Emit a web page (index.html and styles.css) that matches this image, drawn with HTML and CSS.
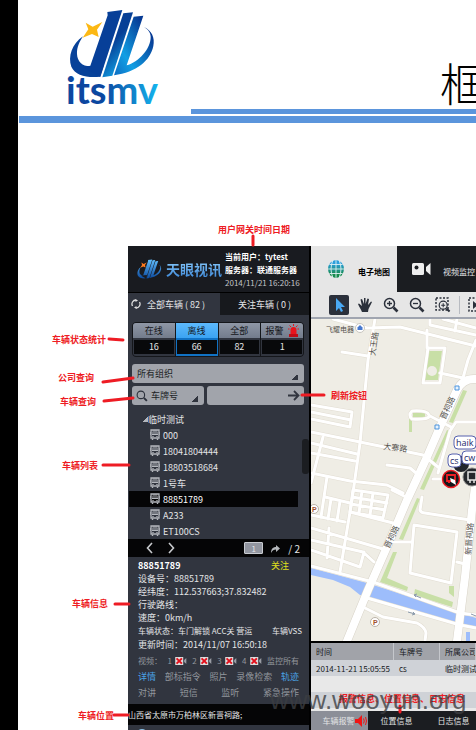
FILE: index.html
```html
<!DOCTYPE html>
<html lang="zh-CN">
<head>
<meta charset="utf-8">
<title>天眼视讯</title>
<link rel="stylesheet" href="styles.css">
</head>
<body>
<svg class="defs" width="0" height="0" aria-hidden="true">
  <defs>
    <symbol id="bus" viewBox="0 0 10 12"><path d="M1 1h8v8H1z" fill="none" stroke="#b4b7bd" stroke-width="1.3"/><path d="M2.500 2h5M2 4h6M2 5.500h6" stroke="#b4b7bd"/><path d="M0 3v3M10 3v3M2.500 9.500v1.500M7.500 9.500v1.500" stroke="#b4b7bd" stroke-width="1.4"/><path d="M2.500 7.500h1M6.500 7.500h1" stroke="#dcdee2"/></symbol>
    <symbol id="cam" viewBox="0 0 13 9"><path d="M0 0h9v9H0z" fill="#ddd"/><path d="M1.500 1.500l6 6M7.500 1.500l-6 6" stroke="#e3101c" stroke-width="2.200"/><path d="M12.500 1v7L10 5.500v-2z" fill="#9a9da4"/></symbol>
    <symbol id="lens" viewBox="0 0 16 16"><circle cx="6.500" cy="6.500" r="5" fill="none" stroke="#2b303b" stroke-width="1.500"/><path d="M10.500 10.500l4 4" stroke="#2b303b" stroke-width="2.600"/></symbol>
  </defs>
</svg>
<div class="slide">
  <header class="masthead">
    <svg class="logo" viewBox="195 24 285 300" role="img" aria-label="itsmv">
      <defs>
        <linearGradient id="g1" x1="0" y1="0" x2=".5" y2="1"><stop offset=".5" stop-color="#063f96"/><stop offset="1" stop-color="#12a6e8"/></linearGradient>
        <linearGradient id="g2" x1="0" y1="0" x2="1" y2="0"><stop offset=".4" stop-color="#0b47a0"/><stop offset="1" stop-color="#14b4ee"/></linearGradient>
        <linearGradient id="g3" x1="1" y1="0" x2="0" y2="1"><stop offset=".2" stop-color="#063a94"/><stop offset=".7" stop-color="#119fe4"/><stop offset="1" stop-color="#0d6cc2"/></linearGradient>
      </defs>
      <path d="M249 109C216 132 203 170 214 200c12 26 46 34 86 30l12-36-32 4c-28 5-48-10-49-36-1-20 8-38 18-53z" fill="#084299"/>
      <path d="M322 36l45-6-66 201-52-29 22-5 52-151z" fill="#073f98"/>
      <path d="M370 40l29-3-62 190-30 5z" fill="url(#g1)"/>
      <path d="M401 50l29-3-50 149c36-10 73-50 72-86 0-12-8-22-20-29 24 12 33 32 28 57-9 44-50 78-118 88z" fill="url(#g3)"/>
      <path d="M257 68l21 12 29-14-16 23 5 22-20-9-28 11 17-25z" fill="#fcb814"/>
      <text x="198" y="313" class="logo-word" fill="url(#g2)">itsmv</text>
    </svg>
    <h1>框</h1>
  </header>
  <div class="rule-thin"></div>
  <div class="rule-thick"></div>

  <div class="app">
    <aside class="side">
      <div class="brand">
        <svg class="brand-mark" viewBox="195 24 275 215" aria-hidden="true">
          <defs><linearGradient id="g4" x1="0" y1="0" x2="0" y2="1"><stop offset="0" stop-color="#62c0ff"/><stop offset="1" stop-color="#0c4a9e"/></linearGradient></defs>
          <path d="M249 109C216 132 203 170 214 200c12 26 46 34 86 30l12-36-32 4c-28 5-48-10-49-36-1-20 8-38 18-53zM322 36l45-6-66 201-52-29 22-5 52-151zM370 40l29-3-62 190-30 5zM401 50l29-3-50 149c36-10 73-50 72-86 0-12-8-22-20-29 24 12 33 32 28 57-9 44-50 78-118 88z" fill="url(#g4)"/>
          <path d="M252 64l24 14 32-16-18 27 6 26-24-10-32 13 19-29z" fill="#ff7a1c"/>
        </svg>
        <strong class="brand-name">天眼视讯</strong>
        <div class="session">
          <b>当前用户：tytest</b>
          <b>服务器：联通服务器</b>
          <time>2014/11/21 16:20:16</time>
        </div>
      </div>
      <nav class="side-tabs">
        <button class="on"><svg width="10" height="10" viewBox="0 0 10 10"><path d="M1.500 7A4 4 0 0 1 5 1M8.500 3A4 4 0 0 1 5 9" fill="none" stroke="#ddd" stroke-width="1.300"/><path d="M4.500 0v3L7 1.500zM5.500 7v3L3 8.500z" fill="#ddd"/></svg>全部车辆 ( 82 )</button>
        <button>关注车辆 ( 0 )</button>
      </nav>
      <div class="stats">
        <button><span>在线</span><b>16</b></button>
        <button class="on"><span>离线</span><b>66</b></button>
        <button><span>全部</span><b>82</b></button>
        <button><span>报警 <svg width="11" height="13" viewBox="0 0 11 13"><path d="M2.500 10V6a3 3 0 0 1 6 0v4z" fill="#e8141c"/><path d="M1 10h9v3H1z" fill="#c00d16"/><path d="M5.500 0v2M1.500 1.500l1.500 1.500M9.500 1.500L8 3M0 5h1.500M9.500 5H11" stroke="#e8141c"/></svg></span><b>1</b></button>
      </div>
      <div class="filters">
        <select class="org" aria-label="组织"><option>所有组织</option></select>
        <div class="search">
          <div class="key">
            <svg width="12" height="12" viewBox="0 0 16 16"><use href="#lens"/></svg>
            <select aria-label="查询方式"><option>车牌号</option></select>
          </div>
          <div class="query">
            <input type="text" aria-label="查询内容">
            <button aria-label="刷新"><svg width="12" height="11" viewBox="0 0 12 11"><path d="M0 5.500h10M6 1l4.500 4.500L6 10" fill="none" stroke="#31353f" stroke-width="1.800"/></svg></button>
          </div>
        </div>
      </div>
      <div class="tree">
        <ul>
          <li class="group"><i></i>临时测试</li>
          <li><svg><use href="#bus"/></svg>000</li>
          <li><svg><use href="#bus"/></svg>18041804444</li>
          <li><svg><use href="#bus"/></svg>18803518684</li>
          <li><svg><use href="#bus"/></svg>1号车</li>
          <li class="on"><svg><use href="#bus"/></svg>88851789</li>
          <li><svg><use href="#bus"/></svg>A233</li>
          <li><svg><use href="#bus"/></svg>ET100CS</li>
        </ul>
        <div class="thumb"></div>
      </div>
      <div class="pager">
        <button aria-label="上一页"><svg width="7" height="12" viewBox="0 0 7 12"><path d="M6 1L1.500 6 6 11" fill="none" stroke="#c8cacd" stroke-width="1.600"/></svg></button>
        <button aria-label="下一页"><svg width="7" height="12" viewBox="0 0 7 12"><path d="M1 1l4.500 5L1 11" fill="none" stroke="#c8cacd" stroke-width="1.600"/></svg></button>
        <input type="text" value="1" aria-label="页码">
        <button aria-label="跳转"><svg width="9" height="9" viewBox="0 0 9 9"><path d="M0 9c0-4 2-6 5-6V1l4 3.500L5 8V5.500C3 5.500 1 6.500 0 9z" fill="#b4b7bb"/></svg></button>
        <span>/ 2</span>
      </div>
      <section class="info">
        <p class="head"><b>88851789</b><a href="#">关注</a></p>
        <p>设备号：88851789</p>
        <p>经纬度：112.537663;37.832482</p>
        <p>行驶路线：</p>
        <p>速度：0km/h</p>
        <p class="split"><span>车辆状态：车门解锁 ACC关 营运</span><span>车辆VSS</span></p>
        <p class="tall">更新时间：2014/11/07 16:50:18</p>
        <div class="acts video"><span>视频：</span><span>1 <svg><use href="#cam"/></svg></span><span>2 <svg><use href="#cam"/></svg></span><span>3 <svg><use href="#cam"/></svg></span><span>4 <svg><use href="#cam"/></svg></span><a href="#">监控所有</a></div>
        <div class="acts"><a class="hot" href="#">详情</a><a href="#">部标指令</a><a href="#">照片</a><a href="#">录像检索</a><a class="hot" href="#">轨迹</a></div>
        <div class="acts"><a href="#">对讲</a><a href="#">短信</a><a href="#">监听</a><a href="#">紧急操作</a></div>
      </section>
      <p class="address">山西省太原市万柏林区新晋祠路;</p>
      <div class="dock"><i></i></div>
    </aside>

    <main class="main">
      <nav class="views">
        <button class="on"><svg width="16" height="18" viewBox="0 0 16 18"><defs><linearGradient id="g5" x1="0" y1="0" x2="0" y2="1"><stop offset=".2" stop-color="#2b9fdc"/><stop offset=".8" stop-color="#178a4c"/></linearGradient></defs><ellipse cx="8" cy="9" rx="8" ry="9" fill="url(#g5)"/><path d="M8 0v18M0 9h16M1.500 4.500h13M1.500 13.500h13M5 0Q1 9 5 18M11 0Q15 9 11 18" fill="none" stroke="#dff1f4" stroke-width=".9"/></svg>电子地图</button>
        <button><svg width="19" height="12" viewBox="0 0 19 12"><rect width="12" height="12" rx="1.500" fill="#eee"/><circle cx="4.500" cy="4.500" r="2" fill="#1b1d21"/><path d="M18.500 0v12L14 8V4z" fill="#eee"/></svg>视频监控</button>
      </nav>
      <div class="tools">
        <button class="on" aria-label="选择"><svg width="20" height="20" viewBox="0 0 20 20"><path d="M7 3v13l3-3 2 4 2-1-2-4h4z" fill="#4aa9f5"/></svg></button>
        <button aria-label="平移"><svg width="16" height="16" viewBox="0 0 16 16"><path d="M5 15C4 12 2 10 1 7l1-.5L5 9 3.500 2.500 5 2l2 5V1h1.500v6L10.500 1.500l1.500.5-1 6 3-3.500 1 .5-3.500 7-.5 3z" fill="#2b303b"/></svg></button>
        <button aria-label="放大"><svg width="16" height="16" viewBox="0 0 16 16"><use href="#lens"/><path d="M4 6.500h5M6.500 4v5" stroke="#2b303b" stroke-width="1.300"/></svg></button>
        <button aria-label="缩小"><svg width="16" height="16" viewBox="0 0 16 16"><use href="#lens"/><path d="M4 6.500h5" stroke="#2b303b" stroke-width="1.300"/></svg></button>
        <button aria-label="框选放大"><svg width="16" height="16" viewBox="0 0 16 16"><path d="M1 1h12v12H1z" fill="none" stroke="#2b303b" stroke-width="1.500" stroke-dasharray="2 1.500"/><g transform="translate(3 3) scale(.8)"><use href="#lens" width="16" height="16"/><path d="M4 6.500h5M6.500 4v5" stroke="#2b303b" stroke-width="1.300"/></g></svg></button>
        <i></i>
        <button aria-label="框选"><svg width="16" height="16" viewBox="0 0 16 16"><path d="M1 1h13v13H1z" fill="none" stroke="#2b303b" stroke-width="1.500" stroke-dasharray="2 1.500"/><path d="M5 4v8l5-4z" fill="#2b303b"/></svg></button>
      </div>
      <svg class="map" viewBox="311 319 165 322" preserveAspectRatio="xMinYMin slice" role="img" aria-label="电子地图">
        <defs>
          <g id="minor">
            <path d="M333 319l34 9 33-1 76 19M375 319l-7 41-8 83-8 57-12 72M342 352l26 4M427 330v18M428 348h17l-5 35h-17zM430 319v6l46 10M457 319l-2 12M443 319l33 9M476 340l-8 20-5 18M440 373l23 5M443 338l33 8"/>
            <path d="M311 405l41 7-2 15-39-8M311 412l40 8M311 432l49 10 63 13 15 12M323 437l-12 46M311 443l46 11M311 453l44 8M311 473l39 8 37 4 16 8M327 477l-6 40M387 465l23 3 6 5M412 411q15-1 17 4t-17 4q-4-4 0-8zM430 416l21 11M476 422h-20l-6 9-12 42M433 479h8"/>
            <path d="M353 490l35 5-5 23-33-6zM362 491l-3 22M373 493l-3 22M352 497l35 6M351 504l34 6M325 497l25 6M331 499l-3 20M340 501l-3 20M311 515l34 7M350 512l43 11M311 528l72 21M311 540l52 12 11 10M311 550l49 17 4-15M329 528l-2 30M422 497l-2 13q1 3 5 3l45 7M392 490l14 7M414 525l43 7-6 51-41-10zM393 542h18M457 562l8 2"/>
            <path d="M311 566l62 16 87 31 16 2M367 598l93 27 16 3M363 607l20 10 34 6q8 4 9 10l-1 8"/>
          </g>
          <g id="major"><path d="M476 379q-13-1-19 11l-17 37-13 30-20 43-17 40-22 50-21 51"/><path d="M476 480l-4 30-7 67-8 64"/></g>
        </defs>
        <path d="M311 319h165v322H311z" fill="#efede5"/>
        <g fill="#c8dfa6">
          <path d="M429 351h13l-4 29h-14zM463 390l4 1-14 32-4-1zM447 430l3 1-26 59-4-1zM409 419h3v13h-3zM413 413h12v4h-12zM417 498l3 1-17 41-4-1zM393 552h4l-10 26 21 9-1 4-27-9zM415 589l38 13-1 5-38-12zM449 586h5v11l-5-4z"/>
        </g>
        <circle cx="432" cy="371" r="5" fill="#efede5"/>
        <path d="M311 568l56 15 90 29 19 6v9l-19-4-89-26-8-2-10-8-17-7-22-5zM466 632h4v9h-4z" fill="#9dbdfb"/>
        <g fill="none" stroke-linejoin="round" stroke-linecap="round">
          <use href="#minor" stroke="#e2ddd2" stroke-width="4"/>
          <use href="#major" stroke="#d8d3c8" stroke-width="9"/>
          <use href="#minor" stroke="#fff" stroke-width="3"/>
          <use href="#major" stroke="#fff" stroke-width="8"/>
        </g>
        <path d="M421 598l-7-3m0 0l3-1m-3 1l2 2M408 612l7 2m0 0l-2-2m2 2l-3 1M476 616l-5-2" stroke="#8b9bac" fill="none"/>
        <g class="roads">
          <text x="326" y="332" class="shop">飞耀电器</text>
          <text transform="translate(375 356) rotate(-82)">大王路</text>
          <text transform="translate(383 449) rotate(7)">大寨路</text>
          <text transform="translate(445 420) rotate(-65)">晋祠路</text>
          <text transform="translate(389 549) rotate(-65)">晋祠路</text>
          <text transform="translate(471 555) rotate(-86)">新晋祠路</text>
        </g>
        <circle cx="360" cy="328" r="4.500" fill="#fff" stroke="#c8c6c0"/><path d="M357.500 330v-2.500L360 325l2.500 2.500v2.500z" fill="#4779cf"/>
        <g fill="#fff" stroke="#bbb3a8"><circle cx="314" cy="509" r="4.500"/><circle cx="375" cy="622" r="4.500"/></g>
        <g class="parking"><text x="312" y="512">P</text><text x="373" y="625">P</text></g>
        <g fill="#e8f3fd" stroke="#4a94dd"><path d="M455 386h4v4h-4zM435 425h4v4h-4z"/></g>
        <circle cx="461" cy="464" r="8" fill="#22252b"/>
        <circle cx="472" cy="477" r="9" fill="#25282d" stroke="#888"/><path d="M468 472h8v8h-8zM470 480v3M474 480v3" fill="none" stroke="#e5e5e5" stroke-width="1.500"/>
        <circle cx="451" cy="479" r="8.500" fill="#17181b" stroke="#ee1c24" stroke-width="1.500"/><path d="M447 475h8v6h-8zM448 482h2" fill="none" stroke="#ee1c24" stroke-width="1.800"/><path d="M450 478l5 2 1 5-5-3z" fill="#fff"/>
        <g fill="#fff" stroke="#5661ae"><rect x="454" y="436" width="22" height="13" rx="4"/><rect x="462" y="451" width="20" height="13" rx="4"/><rect x="448" y="454" width="13" height="13" rx="4"/></g>
        <g class="tags"><text x="456" y="446">haik</text><text x="464" y="461">cw</text><text x="450" y="464">cs</text></g>
      </svg>
      <table class="alarms">
        <thead><tr><th class="when">时间</th><th class="plate">车牌号</th><th>所属公司</th></tr></thead>
        <tbody>
          <tr><td>2014-11-21 15:05:55</td><td>cs</td><td>临时测试</td></tr>
          <tr><td></td><td></td><td></td></tr>
          <tr><td></td><td></td><td></td></tr>
        </tbody>
      </table>
      <nav class="logs">
        <button class="on">车辆报警<svg width="12" height="12" viewBox="0 0 12 12"><path d="M0 4h3l4-4v12L3 8H0z" fill="#f01414"/><path d="M8.500 3.500q1.500 2.500 0 5M10.500 2q2 4 0 8" fill="none" stroke="#f01414"/></svg></button>
        <button>位置信息</button>
        <button>日志信息</button>
      </nav>
    </main>
  </div>

  <svg class="callouts" width="476" height="730" viewBox="0 0 476 730">
    <g stroke="#ee1c24" stroke-width="3" stroke-linecap="round">
      <path d="M253 236v9M109 339l14 1M103 382l30-4M104 401l29-3M103 465h26M115 604h14M114 715h14M302 395h22M400 706v6"/>
    </g>
    <g class="notes">
      <text x="254" y="233" text-anchor="middle">用户网关时间日期</text>
      <text x="79" y="343" text-anchor="middle">车辆状态统计</text>
      <text x="76" y="381" text-anchor="middle">公司查询</text>
      <text x="78" y="405" text-anchor="middle">车辆查询</text>
      <text x="80" y="469" text-anchor="middle">车辆列表</text>
      <text x="90" y="607" text-anchor="middle">车辆信息</text>
      <text x="96" y="719" text-anchor="middle">车辆位置</text>
      <text x="349" y="399" text-anchor="middle">刷新按钮</text>
      <text x="402" y="702" text-anchor="middle">报警信息、位置信息、日志信息</text>
    </g>
    <text class="mark" x="270" y="709">www.wooyun.org</text>
  </svg>
</div>
</body>
</html>
```
FILE: styles.css
```css
* { box-sizing: border-box; }
body {
  margin: 0;
  height: 100vh;
  overflow: hidden;
  background: #fff;
  color: #e4e5e7;
  font: 9px/13px "Noto Sans CJK SC", sans-serif;
  white-space: nowrap;
}
p, h1, ul { margin: 0; padding: 0; }
svg { flex: none; }
.defs { position: absolute; }
button, input, select {
  margin: 0;
  padding: 0;
  border: 0;
  border-radius: 0;
  background: none;
  color: inherit;
  font: inherit;
  appearance: none;
}
a { color: inherit; text-decoration: none; }

.slide { position: relative; min-height: 100vh; border-left: 18px solid #000; overflow: hidden; }
.masthead { display: flex; height: 109px; padding: 8px 0 0 47px; }
.logo { width: 95px; height: 100px; }
.logo-word { font: 700 114px Lato, sans-serif; }
.masthead h1 {
  margin: 45px -9px 0 auto;
  color: #000;
  font: 300 45px/60px "Noto Sans CJK SC", sans-serif;
}
.rule-thin { height: 5px; margin-left: 173px; background: #5b95dc; }
.rule-thick { height: 7px; margin: 2px 0 0 1px; background: #5b95dc; }

.app { display: flex; margin: 123px 0 0 110px; background: #000; }
.side { flex: 0 0 181px; min-width: 0; background: #31353f; }

.brand { display: flex; align-items: center; height: 46px; padding-left: 8px; background: #191b20; }
.brand-mark { width: 26px; height: 26px; }
.brand-name {
  margin-left: 4px;
  background: linear-gradient(#8fd0ff, #3a86d8);
  background-clip: text;
  color: transparent;
  font-size: 14px;
  line-height: 20px;
}
.session { display: grid; margin-left: 3px; padding-top: 1px; color: #fff; font-size: 8px; }
.session time { color: #c3c5c9; }

.side-tabs { display: flex; height: 23px; border-top: 1px solid #000; background: #17191d; }
.side-tabs button { display: flex; flex: 1; align-items: center; justify-content: center; gap: 6px; }
.side-tabs .on { justify-content: flex-start; padding-left: 3px; background: #31353f; }

.stats {
  display: flex;
  gap: 1px;
  margin: 7px 5px 0 4px;
  border: 1px solid #14161a;
  border-radius: 4px;
  background: #14161a;
  overflow: hidden;
}
.stats button { flex: 1; min-width: 0; height: 33px; background: #31353f; }
.stats span {
  display: flex;
  align-items: center;
  justify-content: center;
  gap: 4px;
  height: 15px;
  background: linear-gradient(#8f97a6, #737c8c);
  color: #14161a;
}
.stats b { display: block; margin: 2px 1px; background: #08090b; color: #e4e5e7; font-weight: 400; line-height: 14px; }
.stats .on { background: #1172c4; }
.stats .on span { background: linear-gradient(#5db9fb, #3ba3f3); }

.filters { display: grid; grid-template-columns: minmax(0, 1fr); gap: 3px; margin: 7px 5px 0 4px; color: #1c1f25; }
.org, .key, .query { height: 19px; border-radius: 3px; background-color: #a1a4ab; }
.org, .key {
  background-image: linear-gradient(135deg, transparent 50%, #31353f 50%);
  background-position: right 6px bottom 3px;
  background-repeat: no-repeat;
  background-size: 6px 6px;
}
.org { padding-left: 5px; }
.search { display: flex; gap: 3px; }
.key, .query { display: flex; align-items: center; padding: 0 4px; }
.key { flex: 0 0 72px; gap: 3px; }
.key select { flex: 1; min-width: 0; }
.query { flex: 1; min-width: 0; }
.query input { flex: 1; min-width: 0; }
.query button, .query svg { display: block; }

.tree { display: flex; align-items: flex-start; height: 134px; padding-top: 6px; }
.tree ul { flex: 1; list-style: none; }
.tree li { display: flex; align-items: center; gap: 3px; height: 16px; margin: 0 4px 0 1px; padding-left: 21px; }
.tree li svg { width: 10px; height: 12px; }
.tree .group { gap: 0; padding-left: 14px; }
.tree i { width: 5px; height: 5px; background: linear-gradient(135deg, transparent 50%, #b4b7bd 50%); }
.tree .on { background: #050506; color: #fff; }
.thumb { flex: 0 0 7px; height: 35px; margin-top: 28px; border-radius: 3px; background: #1b1d21; }

.pager { display: flex; align-items: center; height: 18px; padding: 0 9px 0 18px; background: #050506; font-size: 10px; }
.pager button { display: flex; margin-right: 15px; }
.pager input {
  width: 19px;
  height: 12px;
  margin-left: auto;
  border: 1px solid #c9ccd1;
  border-radius: 1px;
  background: #9296a0;
  text-align: center;
  font-size: 8px;
}
.pager input + button { margin: 0 8px; }

.info { padding: 2px 10px 3px; }
.head, .split, .acts { display: flex; justify-content: space-between; }
.head b { color: #fff; }
.head a { margin-right: 10px; color: #e0e01c; }
.split { margin-right: -3px; font-size: 8px; }
.tall, .acts { line-height: 16px; }
.acts { color: #92959c; }
.acts span { display: flex; align-items: center; gap: 3px; }
.acts svg { width: 12px; height: 8px; }
.video { font-size: 8px; }
.acts .hot { color: #4aa3e6; }
.address { height: 21px; background: #050506; font-size: 8px; line-height: 22px; }
.dock { height: 24px; padding: 4px 0 0 8px; }
.dock i { display: block; width: 12px; height: 12px; border-radius: 6px; background: #8cc4e8; }

.main { flex: 1; min-width: 0; margin-left: 2px; background: #e6e6e6; overflow: hidden; }
.views { display: flex; height: 46px; background: #1b1d21; }
.views button { display: flex; flex: none; align-items: center; gap: 12px; padding: 5px 7px 0 15px; font-size: 8px; }
.views button svg { margin-bottom: 6px; }
.views .on { gap: 14px; padding: 5px 7px 0 17px; background: #e6e6e6; color: #000; font-weight: 700; }
.tools { display: flex; align-items: center; gap: 6px; height: 27px; padding-left: 18px; border-bottom: 2px solid #a0a5b0; }
.tools button { display: flex; flex: 0 0 20px; align-items: center; justify-content: center; height: 20px; border-radius: 2px; }
.tools .on { background: #2b303b; }
.tools i { flex: none; width: 1px; height: 18px; background: #b8bbc1; }
.map { display: block; width: 100%; height: 322px; }
.roads { fill: #55524d; font-size: 8px; }
.roads .shop { font-size: 7px; }
.parking { fill: #a0522d; font: 700 7px "Liberation Sans", sans-serif; }
.tags { fill: #1d2a6b; font: 9px "Open Sans", sans-serif; }

.alarms { width: 100%; border-top: 2px solid #000; border-spacing: 0; table-layout: fixed; color: #16181c; font-size: 8px; }
.alarms th, .alarms td { height: 16px; padding: 0 0 0 5px; overflow: hidden; text-align: left; font-weight: 400; }
.alarms th { height: 17px; border-right: 1px solid #c5c7cc; background: #a1a3a9; }
.alarms td { background: #cfd2d7; }
.alarms tr:nth-child(2) td { background: #e8e8e8; }
.alarms .when { width: 83px; }
.alarms .plate { width: 46px; }
.logs { display: flex; height: 22px; border-top: 3px solid #e8e8e8; background: #1b1d21; font-size: 8px; }
.logs button { display: flex; flex: 0 0 57px; align-items: center; justify-content: center; }
.logs .on { padding-left: 10px; background: #8c8f98; }

.callouts { position: absolute; top: 0; left: -18px; fill: none; pointer-events: none; }
.notes { fill: #ee1c24; font: 700 9px "Noto Sans CJK SC", sans-serif; }
.mark { fill: #3c3e42; fill-opacity: .8; font: 26px "Liberation Sans", sans-serif; }
```
